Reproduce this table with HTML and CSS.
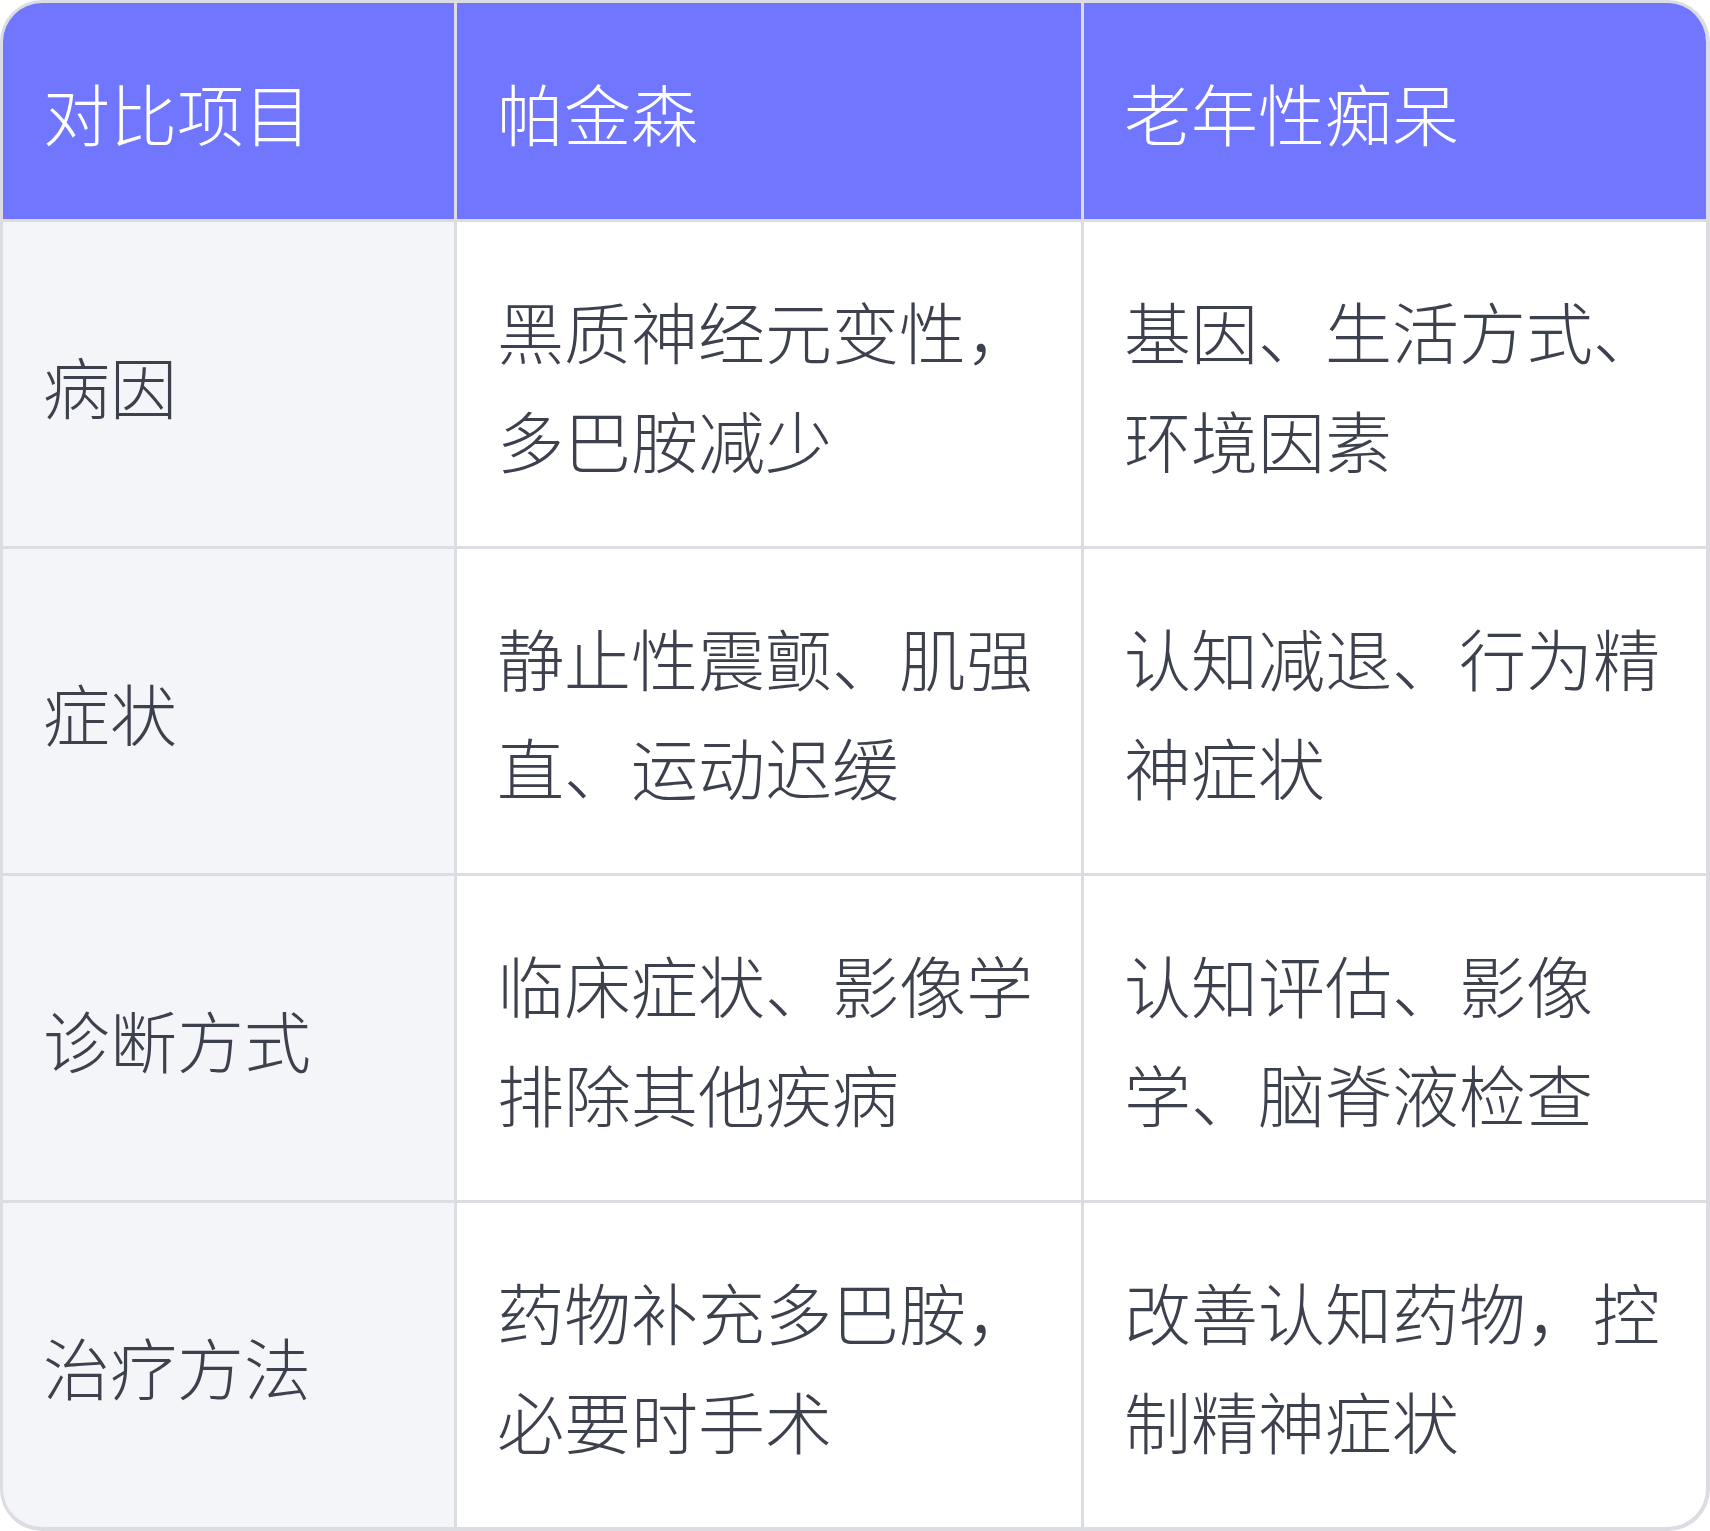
FILE: index.html
```html
<!DOCTYPE html>
<html lang="zh">
<head>
<meta charset="utf-8">
<link rel="stylesheet" href="styles.css">
</head>
<body>
<div class="table">
  <div class="cell head">对比项目</div>
  <div class="cell head">帕金森</div>
  <div class="cell head">老年性痴呆</div>

  <div class="cell label">病因</div>
  <div class="cell">黑质神经元变性，多巴胺减少</div>
  <div class="cell">基因、生活方式、环境因素</div>

  <div class="cell label">症状</div>
  <div class="cell">静止性震颤、肌强直、运动迟缓</div>
  <div class="cell">认知减退、行为精神症状</div>

  <div class="cell label">诊断方式</div>
  <div class="cell">临床症状、影像学排除其他疾病</div>
  <div class="cell">认知评估、影像学、脑脊液检查</div>

  <div class="cell label">治疗方法</div>
  <div class="cell">药物补充多巴胺，必要时手术</div>
  <div class="cell">改善认知药物，控制精神症状</div>
</div>
</body>
</html>
```
FILE: styles.css
```css
html, body {
  margin: 0;
  padding: 0;
  background: #ffffff;
}
.table {
  width: 1710px;
  height: 1531px;
  box-sizing: border-box;
  border: 3px solid #dcdde3;
  border-bottom-width: 4px;
  border-right-width: 4px;
  border-radius: 42px;
  overflow: hidden;
  background: #dcdde3;
  display: grid;
  grid-template-columns: 451px 624px 1fr;
  grid-template-rows: 216px 324px 324px 324px 1fr;
  gap: 3px;
  font-family: "Noto Sans CJK SC", "Noto Sans", sans-serif;
  font-weight: 300;
  font-size: 67px;
  line-height: 109px;
  color: #3d414d;
}
.cell {
  background: #ffffff;
  padding: 0 28px 0 40px;
  display: flex;
  align-items: center;
}
.cell.head {
  background: #7176ff;
  color: #ffffff;
}
.cell.label {
  background: #f4f5f9;
}
```
